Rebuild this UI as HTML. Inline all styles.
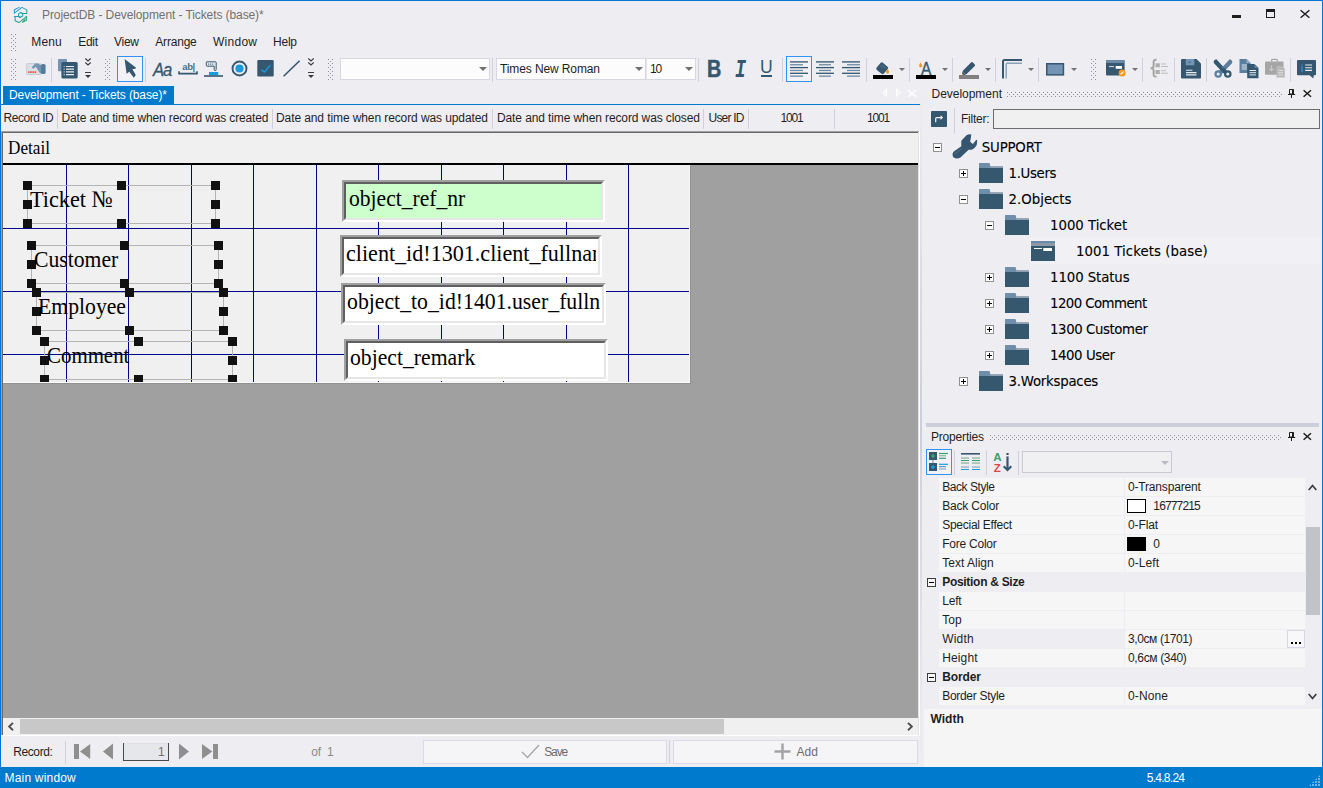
<!DOCTYPE html>
<html><head><meta charset="utf-8"><title>ProjectDB - Development - Tickets (base)*</title>
<style>
*{box-sizing:border-box;margin:0;padding:0}
html,body{width:1323px;height:788px;overflow:hidden;background:#eeeef2}
body{position:relative;font-family:"Liberation Sans",sans-serif;font-size:12px;color:#1e1e1e}
.a{position:absolute}
svg{position:absolute;overflow:visible}
.t{position:absolute;white-space:pre}
.sep{position:absolute;width:1px;background:#cfd0da}
.grip{position:absolute;width:5px;background-image:radial-gradient(circle at 0.5px 0.5px,#9a9aa6 0.6px,transparent 0.7px),radial-gradient(circle at 0.5px 0.5px,#9a9aa6 0.6px,transparent 0.7px);background-size:4px 4px,4px 4px;background-position:0 0,2px 2px}
.dots{position:absolute;height:7px;background-image:radial-gradient(circle at 0.5px 0.5px,#a3a3ad 0.6px,transparent 0.7px),radial-gradient(circle at 0.5px 0.5px,#a3a3ad 0.6px,transparent 0.7px);background-size:4px 4px,4px 4px;background-position:0 0,2px 2px}
.combo{position:absolute;background:#fcfcfc;border:1px solid #d6d7e3}
.arr{position:absolute;width:0;height:0;border-left:4px solid transparent;border-right:4px solid transparent;border-top:4px solid #717171}
.sarr{position:absolute;width:0;height:0;border-left:3px solid transparent;border-right:3px solid transparent;border-top:3px solid #717171}
.selbtn{position:absolute;border:1px solid #3392f5;background:#f2f2f6}
.h{position:absolute;width:9px;height:9px;background:#111}
.lblrect{position:absolute;border:1px solid #b4b4b4}
.vl{position:absolute;width:1px;background:#00008b;top:165px;height:217px}
.hl{position:absolute;height:1px;background:#00008b;left:3px;width:686px}
.tb{position:absolute;border-style:solid;border-color:#a0a0a0 #fff #fff #a0a0a0;border-width:2px}
.tb>div{position:absolute;left:0;top:0;right:0;bottom:0;border-style:solid;border-color:#5f5f5f #e6e6e6 #e6e6e6 #5f5f5f;border-width:2px}
.exp{position:absolute;width:9px;height:9px;border:1px solid #919191;background:#fff}
.exp:before{content:"";position:absolute;left:1px;top:3px;width:5px;height:1px;background:#000}
.exp.p:after{content:"";position:absolute;left:3px;top:1px;width:1px;height:5px;background:#000}
</style></head><body>
<svg width="0" height="0" style="left:0;top:0"><defs><pattern id="dp" width="4" height="4" patternUnits="userSpaceOnUse"><rect x="0" y="0" width="1" height="1" fill="#8f8f98"/><rect x="2" y="2" width="1" height="1" fill="#8f8f98"/></pattern></defs></svg>
<div class="a" style="left:0px;top:0px;width:1323px;height:1px;background:#0674d4;"></div>
<div class="a" style="left:0px;top:0px;width:1px;height:788px;background:#0674d4;"></div>
<div class="a" style="left:1322px;top:0px;width:1px;height:788px;background:#0674d4;"></div>
<div class="t" style='left:42.00px;top:9.14px;font-size:12px;line-height:12px;height:12px;color:#717171;letter-spacing:-0.093px;'>ProjectDB - Development - Tickets (base)*</div>
<svg style="left:8px;top:2px" width="30" height="26" viewBox="0 0 30 26"><defs><linearGradient id="lg" x1="6" y1="5" x2="19" y2="21" gradientUnits="userSpaceOnUse"><stop offset="0" stop-color="#1e96e6"/><stop offset="0.5" stop-color="#2a9db0"/><stop offset="1" stop-color="#3aa868"/></linearGradient></defs><g fill="none" stroke="url(#lg)" stroke-width="1.05" stroke-linejoin="round" stroke-linecap="round"><path d="M6.4 7.7 L11.2 5.4 M6.4 7.7 V11.2 L13.9 5.4 L18.8 7.9 V11.4 H14.8 L12.5 10.4"/><path d="M10.6 11.6 L12.6 10.6 L14.7 11.7 V14 L12.4 15.3 L10.6 14.3Z"/><path d="M6.3 14.5 L10.4 14.5 L12.4 15.4 M7.1 14.8 V18.8 L11 20.6 L18.6 14.4 V18.2 L14.4 20.2 L17.3 17"/></g></svg>
<div class="a" style="left:1232px;top:15px;width:9px;height:3px;background:#1e1e1e"></div>
<div class="a" style="left:1266px;top:9px;width:9px;height:9px;border:1px solid #1e1e1e;border-top-width:3px"></div>
<svg style="left:1300px;top:10px" width="10" height="8" viewBox="0 0 10 8"><path d="M0.6 0.3 L9.4 7.7 M9.4 0.3 L0.6 7.7" stroke="#1e1e1e" stroke-width="1.5" fill="none"/></svg>
<svg style="left:11px;top:34px" width="5" height="17"><rect width="5" height="17" fill="url(#dp)"/></svg>
<div class="t" style='left:31.30px;top:35.84px;font-size:12px;line-height:12px;height:12px;color:#1e1e1e;letter-spacing:0.123px;'>Menu</div>
<div class="t" style='left:78.20px;top:35.84px;font-size:12px;line-height:12px;height:12px;color:#1e1e1e;letter-spacing:-0.296px;'>Edit</div>
<div class="t" style='left:114.00px;top:35.84px;font-size:12px;line-height:12px;height:12px;color:#1e1e1e;letter-spacing:-0.266px;'>View</div>
<div class="t" style='left:155.30px;top:35.84px;font-size:12px;line-height:12px;height:12px;color:#1e1e1e;letter-spacing:-0.201px;'>Arrange</div>
<div class="t" style='left:213.00px;top:35.84px;font-size:12px;line-height:12px;height:12px;color:#1e1e1e;letter-spacing:0.263px;'>Window</div>
<div class="t" style='left:273.00px;top:35.84px;font-size:12px;line-height:12px;height:12px;color:#1e1e1e;letter-spacing:-0.229px;'>Help</div>
<svg style="left:11px;top:59px" width="5" height="21"><rect width="5" height="21" fill="url(#dp)"/></svg>
<svg style="left:105px;top:59px" width="5" height="21"><rect width="5" height="21" fill="url(#dp)"/></svg>
<svg style="left:328px;top:59px" width="5" height="21"><rect width="5" height="21" fill="url(#dp)"/></svg>
<svg style="left:1091px;top:59px" width="5" height="21"><rect width="5" height="21" fill="url(#dp)"/></svg>
<svg style="left:26px;top:62px" width="20" height="14" viewBox="0 0 20 14"><rect x="0.5" y="1.5" width="14.5" height="11" rx="0.8" fill="#dcdfe3" stroke="#c3c7cd" stroke-width="0.8"/><path d="M2 9.3h1.6v1.6H2z M4.2 9.3h1.6v1.6H4.2z M6.4 9.3h1.6v1.6H6.4z M8.6 9.3h1.6v1.6H8.6z" fill="#f0504a"/><path d="M6 5.2 Q8.5 1.2 11 1.3 L15.5 3.2 L15.5 11.5 Q13.5 11.5 12.5 9 L9.8 4.8 L7.6 6.6 Q5.6 6.8 6 5.2Z" fill="#7696b4"/><rect x="15" y="2" width="4.6" height="10" rx="1.6" fill="#567c9c"/></svg>
<div class="sep" style="left:51px;top:58px;height:24px"></div>
<svg style="left:58px;top:59px" width="20" height="20" viewBox="0 0 20 20"><rect x="0" y="0" width="9" height="12.3" rx="0.8" fill="#7494b5"/><rect x="3.4" y="3" width="16.3" height="16.5" rx="1.5" fill="#35576f"/><path d="M8 7.5H16 M8 10.2H16 M8 12.9H16 M8 15.6H16" stroke="#e8edf2" stroke-width="1.2"/><path d="M5.6 7.5H6.8 M5.6 10.2H6.8 M5.6 12.9H6.8 M5.6 15.6H6.8" stroke="#b9c7d4" stroke-width="1.2"/></svg>
<svg style="left:85px;top:58px" width="6" height="21" viewBox="0 0 6 21"><path d="M0.3 0.5 L3 3 L5.7 0.5 M0.3 4.5 L3 7 L5.7 4.5" fill="none" stroke="#3b3b3b" stroke-width="1.1"/><rect x="0" y="14" width="6" height="1" fill="#3b3b3b"/><path d="M0 17 H6 L3 20Z" fill="#3b3b3b"/></svg>
<div class="selbtn" style="left:117px;top:56px;width:26px;height:26px"></div>
<svg style="left:117px;top:56px" width="26" height="26" viewBox="0 0 26 26"><path d="M7.6 3.1 L18.8 11.6 L18.9 12.6 L15.4 13.3 L18.8 19.1 L16.8 21.8 L12.3 15.8 L9.6 17.7Z" fill="#35576f"/></svg>
<div class="sep" style="left:145px;top:58px;height:24px"></div>
<div class="t" style="left:152.5px;top:58.5px;font-size:19px;line-height:22px;font-style:italic;color:#35576f;-webkit-text-stroke:0.3px #35576f;letter-spacing:-1.2px;transform-origin:0 0;transform:scaleX(0.88)">Aa</div>
<div class="t" style="left:182.3px;top:60.8px;font-size:9.5px;line-height:12px;font-weight:bold;color:#4d6f8a;letter-spacing:-0.4px">ab|</div>
<svg style="left:178px;top:71px" width="20" height="4" viewBox="0 0 20 4"><path d="M1 0.3 V2.6 H19 V0.3" fill="none" stroke="#35576f" stroke-width="1.6"/></svg>
<svg style="left:204px;top:61px" width="19" height="16" viewBox="0 0 19 16"><path d="M2.7 0.8 H11.5 Q12.2 0.8 12.2 1.6 V8.6 Q12.2 9.6 11.2 9.6 Q10.2 9.6 10.2 8.6 V5.2 H3.2 Q2.3 5.2 2.3 4.2 V1.4 Q2.3 0.8 2.7 0.8Z" fill="#e3e8ee" stroke="#35576f" stroke-width="1"/><path d="M4 3.2h1.2 M6 3.2h1.2 M8 3.2h1.2" stroke="#5b7f9e" stroke-width="1.2"/><rect x="5" y="11" width="9.3" height="3.3" fill="#1a9bdc"/><rect x="0" y="14.2" width="19" height="1.6" fill="#35576f"/></svg>
<svg style="left:231px;top:60px" width="17" height="17" viewBox="0 0 17 17"><circle cx="8.5" cy="8.5" r="7" fill="none" stroke="#35576f" stroke-width="1.9"/><circle cx="8.5" cy="8.5" r="4.1" fill="#1a9bdc"/></svg>
<svg style="left:257px;top:60px" width="17" height="17" viewBox="0 0 17 17"><rect x="0.3" y="0.1" width="16.4" height="16.4" rx="1.2" fill="#35576f"/><path d="M4.3 9.8 L7.5 12 L13.2 5.1" fill="none" stroke="#1a9bdc" stroke-width="1.4"/></svg>
<svg style="left:283px;top:60px" width="17" height="17" viewBox="0 0 17 17"><path d="M0.6 16.3 L16.6 0.7" stroke="#35576f" stroke-width="1.6"/></svg>
<svg style="left:308px;top:58px" width="6" height="21" viewBox="0 0 6 21"><path d="M0.3 0.5 L3 3 L5.7 0.5 M0.3 4.5 L3 7 L5.7 4.5" fill="none" stroke="#3b3b3b" stroke-width="1.1"/><rect x="0" y="14" width="6" height="1" fill="#3b3b3b"/><path d="M0 17 H6 L3 20Z" fill="#3b3b3b"/></svg>
<div class="combo" style="left:340px;top:58px;width:150px;height:22px"></div>
<div class="arr" style="left:479px;top:67px"></div>
<div class="sep" style="left:492px;top:58px;height:24px"></div>
<div class="combo" style="left:496px;top:58px;width:150px;height:22px"></div>
<div class="arr" style="left:635px;top:67px"></div>
<div class="t" style='left:500.00px;top:63.14px;font-size:12px;line-height:12px;height:12px;color:#1e1e1e;letter-spacing:-0.113px;'>Times New Roman</div>
<div class="combo" style="left:646px;top:58px;width:50px;height:22px;border-left-color:#e4e5ee"></div>
<div class="arr" style="left:685px;top:67px"></div>
<div class="t" style='left:650.00px;top:63.14px;font-size:12px;line-height:12px;height:12px;color:#1e1e1e;letter-spacing:-1.200px;'>10</div>
<div class="sep" style="left:698px;top:58px;height:24px"></div>
<div class="t" style="left:707px;top:55px;font-size:23px;line-height:28px;font-weight:bold;color:#35576f;-webkit-text-stroke:0.5px #35576f;transform-origin:0 0;transform:scaleX(0.86)">B</div>
<div class="t" style='left:734.5px;top:56.5px;font-family:"Liberation Mono",monospace;font-size:25.5px;line-height:28px;font-weight:bold;font-style:italic;color:#35576f;transform-origin:0 0;transform:scaleX(0.72)'>I</div>
<div class="t" style="left:759.8px;top:55.8px;font-size:18.5px;line-height:22px;color:#35576f;transform-origin:0 0;transform:scaleX(0.95)">U</div>
<div class="a" style="left:761px;top:75.3px;width:11px;height:1.7px;background:#35576f;"></div>
<div class="sep" style="left:782px;top:58px;height:24px"></div>
<div class="selbtn" style="left:786px;top:56px;width:26px;height:26px"></div>
<svg style="left:790px;top:60px" width="18" height="18" viewBox="0 0 18 18"><rect x="0" y="1.25" width="18" height="1.3" fill="#35576f"/><rect x="0" y="4.10" width="13" height="1.3" fill="#6d8aa3"/><rect x="0" y="6.95" width="18" height="1.3" fill="#35576f"/><rect x="0" y="9.80" width="13" height="1.3" fill="#6d8aa3"/><rect x="0" y="12.65" width="18" height="1.3" fill="#35576f"/><rect x="0" y="15.50" width="13" height="1.3" fill="#6d8aa3"/></svg>
<svg style="left:816px;top:60px" width="18" height="18" viewBox="0 0 18 18"><rect x="0" y="1.25" width="18" height="1.3" fill="#35576f"/><rect x="3" y="4.10" width="12" height="1.3" fill="#6d8aa3"/><rect x="0" y="6.95" width="18" height="1.3" fill="#35576f"/><rect x="3" y="9.80" width="12" height="1.3" fill="#6d8aa3"/><rect x="0" y="12.65" width="18" height="1.3" fill="#35576f"/><rect x="3" y="15.50" width="12" height="1.3" fill="#6d8aa3"/></svg>
<svg style="left:842px;top:60px" width="18" height="18" viewBox="0 0 18 18"><rect x="0" y="1.25" width="18" height="1.3" fill="#35576f"/><rect x="5" y="4.10" width="13" height="1.3" fill="#6d8aa3"/><rect x="0" y="6.95" width="18" height="1.3" fill="#35576f"/><rect x="5" y="9.80" width="13" height="1.3" fill="#6d8aa3"/><rect x="0" y="12.65" width="18" height="1.3" fill="#35576f"/><rect x="5" y="15.50" width="13" height="1.3" fill="#6d8aa3"/></svg>
<div class="sep" style="left:866px;top:58px;height:24px"></div>
<svg style="left:873px;top:61px" width="20" height="14" viewBox="0 0 20 14"><g transform="rotate(40 9.2 7.3)"><rect x="4.5" y="2.6" width="9.4" height="9.4" rx="1.7" fill="#35576f"/><path d="M6.3 5h5.6 M6.3 6.8h3" stroke="#5b7f9e" stroke-width="0.7"/></g><path d="M14.4 7.8 Q16.4 10.2 16.1 11.5 Q15.6 12.8 14.3 12.6 Q12.7 12.2 13 10.5Z" fill="#f59a1b"/></svg>
<div class="a" style="left:873px;top:75px;width:20px;height:4px;background:#000;"></div>
<div class="sarr" style="left:899px;top:68px"></div>
<div class="sep" style="left:909px;top:58px;height:24px"></div>
<svg style="left:916px;top:61px" width="20" height="14" viewBox="0 0 20 14"><path d="M4.4 1.2 Q6.6 4 6.3 5.3 Q5.7 6.6 4.4 6.4 Q2.8 6 3.1 4.3Z" fill="#f59a1b"/></svg>
<div class="t" style="left:921.4px;top:58.4px;font-size:18.5px;line-height:22px;color:#35576f;-webkit-text-stroke:0.35px #35576f;transform-origin:0 0;transform:scaleX(0.84)">A</div>
<div class="a" style="left:916px;top:75px;width:20px;height:4px;background:#000;"></div>
<div class="sarr" style="left:942px;top:68px"></div>
<div class="sep" style="left:952px;top:58px;height:24px"></div>
<svg style="left:959px;top:61px" width="20" height="14" viewBox="0 0 20 14"><g transform="rotate(-45 9 8)"><rect x="3.5" y="5.6" width="13.5" height="5" rx="1" fill="#35576f"/><path d="M3.5 5.6 L0.2 8.1 L3.5 10.6Z" fill="#35576f"/><path d="M1.8 6.9 L0 8.1 L1.8 9.3Z" fill="#f59a1b"/></g></svg>
<div class="a" style="left:959px;top:75px;width:20px;height:4px;background:#808080;"></div>
<div class="sarr" style="left:985px;top:68px"></div>
<div class="sep" style="left:995px;top:58px;height:24px"></div>
<svg style="left:1002px;top:59px" width="20" height="20" viewBox="0 0 20 20"><path d="M1 19.5 V2.5 Q1 1 2.5 1 H20" fill="none" stroke="#35576f" stroke-width="2"/><path d="M4.2 19.5 V5 Q4.2 4.2 5 4.2 H20" fill="none" stroke="#8ea2b6" stroke-width="1.5"/></svg>
<div class="sarr" style="left:1028px;top:68px"></div>
<div class="sep" style="left:1038px;top:58px;height:24px"></div>
<svg style="left:1046px;top:62.6px" width="18.2" height="12.6" viewBox="0 0 18.2 12.6"><rect x="0.75" y="0.75" width="16.7" height="11.1" fill="#7494b5" stroke="#35576f" stroke-width="1.5"/></svg>
<div class="sarr" style="left:1071px;top:68px"></div>
<svg style="left:1106px;top:60px" width="20" height="17" viewBox="0 0 20 17"><rect x="0" y="0" width="18.6" height="15.5" rx="1" fill="#35576f"/><rect x="0" y="0" width="18.6" height="3" rx="0.8" fill="#6b8aa5"/><rect x="3" y="6.2" width="5" height="0.9" fill="#e8edf2"/><rect x="9.7" y="6" width="6.3" height="2.8" fill="#fff"/><circle cx="16.1" cy="13" r="3.5" fill="#f59a1b"/><path d="M14.6 14.4 L17.6 11.6" stroke="#fff" stroke-width="1.2"/></svg>
<div class="sarr" style="left:1132px;top:68px"></div>
<div class="sep" style="left:1142px;top:58px;height:24px"></div>
<svg style="left:1149px;top:59px" width="20" height="19" viewBox="0 0 20 19"><path d="M7.5 0.8 Q4.6 0.6 4.6 3 V7 Q4.6 9.2 1.6 9.2 Q4.6 9.2 4.6 11.4 V15.4 Q4.6 17.8 7.5 17.6" fill="none" stroke="#a3a3a3" stroke-width="1.9"/><rect x="6.5" y="4.3" width="4.3" height="4" fill="#adadad"/><rect x="6.5" y="11" width="4.3" height="4" fill="#adadad"/><path d="M12 5H17 M12 7.5H19 M12 11.7H17 M12 14.2H19" stroke="#bdbdbd" stroke-width="1"/></svg>
<div class="sep" style="left:1174px;top:58px;height:24px"></div>
<svg style="left:1181px;top:59px" width="20" height="20" viewBox="0 0 20 20"><path d="M1 0 H15.5 L20 4.5 V18.5 Q20 19.5 19 19.5 H1 Q0 19.5 0 18.5 V1 Q0 0 1 0Z" fill="#35576f"/><rect x="4.8" y="0" width="8.5" height="6.3" fill="#7494b5"/><rect x="7.5" y="2.7" width="2.2" height="1" fill="#35576f"/><path d="M5 11.3H11.5 M5 13.6H15.5 M5 15.9H15.5" stroke="#e8edf2" stroke-width="1.1"/></svg>
<div class="sep" style="left:1206px;top:58px;height:24px"></div>
<svg style="left:1213px;top:59px" width="20" height="19" viewBox="0 0 20 19"><path d="M16.6 0.3 Q19.8 1 19.2 4 L8.4 15.4 L5.4 12.6Z" fill="#5b7f9e"/><circle cx="14.8" cy="15" r="2.7" fill="none" stroke="#35576f" stroke-width="2.2"/><path d="M3.4 0.3 Q0.2 1 0.8 4 L11.6 15.4 L14.6 12.6Z" fill="#35576f"/><circle cx="5.2" cy="15" r="2.7" fill="none" stroke="#5b7f9e" stroke-width="2.2"/><circle cx="10" cy="8.6" r="0.8" fill="#5b7f9e"/></svg>
<svg style="left:1239px;top:59px" width="20" height="20" viewBox="0 0 20 20"><path d="M0.5 0 H7.5 L11.6 4 V14 H0.5Z" fill="#5b7f9e"/><path d="M7.5 0 L11.6 4 H7.5Z" fill="#8fabc6"/><path d="M2.6 6H8 M2.6 8H8 M2.6 10H8" stroke="#dfe7ee" stroke-width="1"/><path d="M8.2 5 H15.4 L19.5 9 V19.3 H8.2Z" fill="#35576f"/><path d="M15.4 5 L19.5 9 H15.4Z" fill="#5b7f9e"/><path d="M10.5 11.5H17 M10.5 13.7H17 M10.5 15.9H17" stroke="#e8edf2" stroke-width="1"/></svg>
<svg style="left:1265px;top:59px" width="20" height="19" viewBox="0 0 20 19"><rect x="0" y="2.4" width="18.5" height="13.3" rx="1" fill="#a6a6a6"/><path d="M6.5 2.4 V1.8 Q6.5 0.3 8 0.3 H11 Q12.5 0.3 12.5 1.8 V2.4" fill="none" stroke="#a6a6a6" stroke-width="1.3"/><path d="M6.5 6 V11.5 M4.3 9.6 L6.5 11.8 L8.7 9.6" fill="none" stroke="#c9c9c9" stroke-width="1.1"/><path d="M11.5 7 H17 L19.8 9.7 V18.6 H11.5Z" fill="#b9b9b9"/><path d="M13.3 11.5H18 M13.3 13.7H18 M13.3 15.9H18" stroke="#dcdcdc" stroke-width="1"/></svg>
<div class="sep" style="left:1290px;top:58px;height:24px"></div>
<svg style="left:1297px;top:60px" width="19" height="19" viewBox="0 0 19 19"><path d="M1 0 H18 Q19 0 19 1 V14.3 Q19 15.3 18 15.3 H16.8 L16.3 18.4 L12.6 15.3 H1 Q0 15.3 0 14.3 V1 Q0 0 1 0Z" fill="#35576f"/><path d="M8.2 5H15 M8.2 7.7H15 M8.2 10.4H15" stroke="#e8edf2" stroke-width="1.1"/><path d="M5 4.2V5.4 M5 6.6 V11 M4 6.8 H5 M4 10.8H6.2" stroke="#1a9bdc" stroke-width="1.2" fill="none"/></svg>
<svg style="left:882px;top:88px" width="36" height="10" viewBox="0 0 36 10"><path d="M4.7 0.8 L0.6 4.7 L4.7 8.6Z" fill="#f4f4f7" stroke="#fff" stroke-width="1"/><path d="M14.5 0.8 L18.6 4.7 L14.5 8.6Z" fill="#f4f4f7" stroke="#fff" stroke-width="1"/><path d="M26.4 2.2 L33.8 8.8 M33.8 2.2 L26.4 8.8" stroke="#fff" stroke-width="1.5"/></svg>
<div class="a" style="left:1px;top:86px;width:2px;height:18px;background:#f5f5f7;"></div>
<div class="a" style="left:3px;top:86px;width:171px;height:18px;background:#007acc;"></div>
<div class="t" style='left:9.00px;top:88.84px;font-size:12px;line-height:12px;height:12px;color:#fff;letter-spacing:-0.098px;'>Development - Tickets (base)*</div>
<div class="a" style="left:1px;top:104px;width:919px;height:1px;background:#007acc;"></div>
<div class="sep" style="left:57px;top:109px;height:20px"></div>
<div class="sep" style="left:272px;top:109px;height:20px"></div>
<div class="sep" style="left:492px;top:109px;height:20px"></div>
<div class="sep" style="left:703px;top:109px;height:20px"></div>
<div class="sep" style="left:748px;top:109px;height:20px"></div>
<div class="sep" style="left:834px;top:109px;height:20px"></div>
<div class="t" style='left:3.60px;top:112.24px;font-size:12px;line-height:12px;height:12px;color:#1e1e1e;letter-spacing:-0.491px;'>Record ID</div>
<div class="t" style='left:61.40px;top:112.24px;font-size:12px;line-height:12px;height:12px;color:#1e1e1e;letter-spacing:-0.139px;'>Date and time when record was created</div>
<div class="t" style='left:276.00px;top:112.24px;font-size:12px;line-height:12px;height:12px;color:#1e1e1e;letter-spacing:-0.096px;'>Date and time when record was updated</div>
<div class="t" style='left:497.00px;top:112.24px;font-size:12px;line-height:12px;height:12px;color:#1e1e1e;letter-spacing:-0.108px;'>Date and time when record was closed</div>
<div class="t" style='left:708.50px;top:112.24px;font-size:12px;line-height:12px;height:12px;color:#1e1e1e;letter-spacing:-0.779px;'>User ID</div>
<div class="t" style='left:780.50px;top:112.24px;font-size:12px;line-height:12px;height:12px;color:#1e1e1e;letter-spacing:-1.200px;'>1001</div>
<div class="t" style='left:867.00px;top:112.24px;font-size:12px;line-height:12px;height:12px;color:#1e1e1e;letter-spacing:-1.200px;'>1001</div>
<div class="a" style="left:1px;top:131px;width:919px;height:604px;background:#a0a0a0;"></div>
<div class="a" style="left:2px;top:132px;width:918px;height:1px;background:#696969;"></div>
<div class="a" style="left:2px;top:132px;width:1px;height:603px;background:#696969;"></div>
<div class="a" style="left:918px;top:132px;width:1px;height:636px;background:#e3e3e3;"></div>
<div class="a" style="left:919px;top:131px;width:1px;height:637px;background:#fff;"></div>
<div class="a" style="left:3px;top:133px;width:915px;height:30px;background:#f0f0f0;"></div>
<div class="t" style='left:8.00px;top:140.29px;font-size:17.8px;line-height:17.8px;height:17.8px;color:#000;font-family:"Liberation Serif",serif;transform-origin:0 0;transform:scaleX(0.9666);'>Detail</div>
<div class="a" style="left:3px;top:163px;width:915px;height:2px;background:#000;"></div>
<div class="a" style="left:3px;top:165px;width:686px;height:217px;background:#f0f0f0;"></div>
<div class="a" style="left:689px;top:165px;width:1px;height:218px;background:#fafafa;"></div>
<div class="a" style="left:3px;top:382px;width:687px;height:1px;background:#fafafa;"></div>
<div class="a" style="left:690px;top:165px;width:1px;height:219px;background:#919191;"></div>
<div class="a" style="left:3px;top:383px;width:688px;height:1px;background:#919191;"></div>
<div class="vl" style="left:66px"></div>
<div class="vl" style="left:128px"></div>
<div class="vl" style="left:191px"></div>
<div class="vl" style="left:253px"></div>
<div class="vl" style="left:316px"></div>
<div class="vl" style="left:378px"></div>
<div class="vl" style="left:441px"></div>
<div class="vl" style="left:503px"></div>
<div class="vl" style="left:566px"></div>
<div class="vl" style="left:628px"></div>
<div class="hl" style="top:228px"></div>
<div class="hl" style="top:291px"></div>
<div class="hl" style="top:354px"></div>
<div class="a" style="left:4px;top:165px;width:685px;height:217px;overflow:hidden">
<div class="lblrect" style="left:23px;top:20px;width:189px;height:39px"></div>
<div class="h" style="left:19px;top:16px"></div>
<div class="h" style="left:19px;top:35px"></div>
<div class="h" style="left:19px;top:54px"></div>
<div class="h" style="left:113px;top:16px"></div>
<div class="h" style="left:113px;top:54px"></div>
<div class="h" style="left:207px;top:16px"></div>
<div class="h" style="left:207px;top:35px"></div>
<div class="h" style="left:207px;top:54px"></div>
<div class="lblrect" style="left:27px;top:80px;width:188px;height:39px"></div>
<div class="h" style="left:23px;top:76px"></div>
<div class="h" style="left:23px;top:95px"></div>
<div class="h" style="left:23px;top:114px"></div>
<div class="h" style="left:116px;top:76px"></div>
<div class="h" style="left:116px;top:114px"></div>
<div class="h" style="left:210px;top:76px"></div>
<div class="h" style="left:210px;top:95px"></div>
<div class="h" style="left:210px;top:114px"></div>
<div class="lblrect" style="left:32px;top:127px;width:188px;height:39px"></div>
<div class="h" style="left:28px;top:123px"></div>
<div class="h" style="left:28px;top:142px"></div>
<div class="h" style="left:28px;top:161px"></div>
<div class="h" style="left:121px;top:123px"></div>
<div class="h" style="left:121px;top:161px"></div>
<div class="h" style="left:215px;top:123px"></div>
<div class="h" style="left:215px;top:142px"></div>
<div class="h" style="left:215px;top:161px"></div>
<div class="lblrect" style="left:40px;top:176px;width:189px;height:39px"></div>
<div class="h" style="left:36px;top:172px"></div>
<div class="h" style="left:36px;top:191px"></div>
<div class="h" style="left:36px;top:210px"></div>
<div class="h" style="left:130px;top:172px"></div>
<div class="h" style="left:130px;top:210px"></div>
<div class="h" style="left:224px;top:172px"></div>
<div class="h" style="left:224px;top:191px"></div>
<div class="h" style="left:224px;top:210px"></div>
</div>
<div class="t" style='left:29.50px;top:187.82px;font-size:23.5px;line-height:23.5px;height:23.5px;color:#000;font-family:"Liberation Serif",serif;transform-origin:0 0;transform:scaleX(0.9463);'>Ticket №</div>
<div class="t" style='left:33.50px;top:247.62px;font-size:23.5px;line-height:23.5px;height:23.5px;color:#000;font-family:"Liberation Serif",serif;transform-origin:0 0;transform:scaleX(0.9224);'>Customer</div>
<div class="t" style='left:38.00px;top:294.62px;font-size:23.5px;line-height:23.5px;height:23.5px;color:#000;font-family:"Liberation Serif",serif;transform-origin:0 0;transform:scaleX(0.9236);'>Employee</div>
<div class="t" style='left:47.40px;top:343.72px;font-size:23.5px;line-height:23.5px;height:23.5px;color:#000;font-family:"Liberation Serif",serif;transform-origin:0 0;transform:scaleX(0.8889);'>Comment</div>
<div class="tb" style="left:342px;top:180px;width:263px;height:42px;background:#ccffcc"><div></div></div>
<div class="t" style='left:348.70px;top:187.12px;font-size:23.5px;line-height:23.5px;height:23.5px;color:#000;font-family:"Liberation Serif",serif;transform-origin:0 0;transform:scaleX(0.9188);'>object_ref_nr</div>
<div class="tb" style="left:340px;top:235px;width:262px;height:42px;background:#fff"><div></div></div>
<div class="t" style='left:346.30px;top:242.12px;font-size:23.5px;line-height:23.5px;height:23.5px;color:#000;font-family:"Liberation Serif",serif;transform-origin:0 0;transform:scaleX(0.9400);width:266.17px;overflow:hidden;'>client_id!1301.client_fullnan</div>
<div class="tb" style="left:341px;top:283px;width:265px;height:42px;background:#fff"><div></div></div>
<div class="t" style='left:347.00px;top:290.02px;font-size:23.5px;line-height:23.5px;height:23.5px;color:#000;font-family:"Liberation Serif",serif;transform-origin:0 0;transform:scaleX(0.9260);width:274.298px;overflow:hidden;'>object_to_id!1401.user_fulln</div>
<div class="tb" style="left:344px;top:339px;width:264px;height:42px;background:#fff"><div></div></div>
<div class="t" style='left:349.70px;top:346.32px;font-size:23.5px;line-height:23.5px;height:23.5px;color:#000;font-family:"Liberation Serif",serif;transform-origin:0 0;transform:scaleX(0.9232);'>object_remark</div>
<div class="a" style="left:3px;top:718px;width:915px;height:17px;background:#f0f0f0;"></div>
<div class="a" style="left:20px;top:719px;width:704px;height:15px;background:#c8c8c8;"></div>
<div class="a" style="left:1px;top:735px;width:919px;height:1px;background:#fff;"></div>
<svg style="left:7px;top:722px" width="8" height="9" viewBox="0 0 8 9"><path d="M6 0.9 L2.2 4.6 L6 8.3" fill="none" stroke="#505050" stroke-width="2"/></svg>
<svg style="left:906px;top:722px" width="8" height="9" viewBox="0 0 8 9"><path d="M2 0.9 L5.8 4.6 L2 8.3" fill="none" stroke="#505050" stroke-width="2"/></svg>
<div class="a" style="left:1px;top:736px;width:919px;height:32px;background:#eeeef2;"></div>
<div class="t" style='left:13.20px;top:746.34px;font-size:12px;line-height:12px;height:12px;color:#1e1e1e;letter-spacing:-0.389px;'>Record:</div>
<div class="sep" style="left:65px;top:741px;height:23px"></div>
<svg style="left:74px;top:744px" width="17" height="15" viewBox="0 0 17 15"><rect x="0" y="0" width="5" height="15" fill="#8f8f8f"/><path d="M16.2 0 L16.2 15 L6 7.5Z" fill="#8f8f8f"/></svg>
<svg style="left:103px;top:743px" width="11" height="17" viewBox="0 0 11 17"><path d="M10 0.5 L10 16.5 L0 8.5Z" fill="#8f8f8f"/></svg>
<div class="a" style="left:123px;top:743px;width:46px;height:18px;background:#e6e7ea;border:1px solid #4a4a4a;border-top-color:#e0e1e6"></div>
<div class="a" style="left:123px;top:743px;width:1px;height:2px;background:#4a4a4a;"></div>
<div class="a" style="left:168px;top:743px;width:1px;height:2px;background:#4a4a4a;"></div>
<div class="t" style='left:158.00px;top:746.34px;font-size:12px;line-height:12px;height:12px;color:#717171;'>1</div>
<svg style="left:178px;top:743px" width="11" height="17" viewBox="0 0 11 17"><path d="M1 0.5 L1 16.5 L11 8.5Z" fill="#8f8f8f"/></svg>
<svg style="left:202px;top:744px" width="17" height="15" viewBox="0 0 17 15"><rect x="11" y="0" width="5" height="15" fill="#8f8f8f"/><path d="M0 0 L0 15 L10.3 7.5Z" fill="#8f8f8f"/></svg>
<div class="t" style='left:311.20px;top:746.34px;font-size:12px;line-height:12px;height:12px;color:#8a8a8a;letter-spacing:-0.190px;'>of  1</div>
<div class="a" style="left:423px;top:740px;width:244px;height:24px;background:#f5f5f7;border:1px solid #dadbe4"></div>
<div class="a" style="left:673px;top:740px;width:245px;height:24px;background:#f5f5f7;border:1px solid #dadbe4"></div>
<div class="sep" style="left:669px;top:740px;height:24px"></div>
<svg style="left:521px;top:744px" width="19" height="15" viewBox="0 0 19 15"><path d="M1 8 L6.5 13.5 L18 1" fill="none" stroke="#a6a6a6" stroke-width="1.4"/></svg>
<div class="t" style='left:544.20px;top:745.84px;font-size:12px;line-height:12px;height:12px;color:#6d6d6d;letter-spacing:-1.086px;'>Save</div>
<svg style="left:774px;top:743px" width="17" height="17" viewBox="0 0 17 17"><path d="M8.5 0.5V16.5M0.5 8.5H16.5" fill="none" stroke="#a3a3a3" stroke-width="2.4"/></svg>
<div class="t" style='left:796.60px;top:745.84px;font-size:12px;line-height:12px;height:12px;color:#6d6d6d;letter-spacing:-0.030px;'>Add</div>
<div class="a" style="left:920px;top:86px;width:2px;height:681px;background:linear-gradient(to bottom,#eeeef2 0%,#cccedb 50%,#eeeef2 100%);"></div>
<div class="t" style='left:931.50px;top:87.84px;font-size:12px;line-height:12px;height:12px;color:#1e1e1e;letter-spacing:-0.022px;'>Development</div>
<svg style="left:1007px;top:92px" width="275" height="5"><rect width="275" height="5" fill="url(#dp)"/></svg>
<svg style="left:1288px;top:89px" width="8" height="9" viewBox="0 0 8 9"><path d="M1.5 0.5H5.5V5H1.5Z" fill="none" stroke="#1e1e1e" stroke-width="1"/><path d="M5 0.5V5" stroke="#1e1e1e" stroke-width="2"/><path d="M0 5.5H7.2 M3.5 6V9" fill="none" stroke="#1e1e1e" stroke-width="1"/></svg>
<svg style="left:1303px;top:90px" width="8.6" height="7" viewBox="0 0 8.6 7"><path d="M0.6 0.2 L8 6.8 M8 0.2 L0.6 6.8" fill="none" stroke="#1e1e1e" stroke-width="1.5"/></svg>
<svg style="left:931px;top:111px" width="16" height="16" viewBox="0 0 16 16"><rect width="16" height="16" rx="0.8" fill="#35576f"/><path d="M4.7 11.3 V7.6 Q4.7 6.7 5.6 6.7 H10" fill="none" stroke="#eef2f6" stroke-width="1.2"/><path d="M9.5 4.2 L12.1 6.6 L9.5 9Z" fill="#eef2f6"/></svg>
<div class="sep" style="left:954px;top:108px;height:25px"></div>
<div class="t" style='left:961.00px;top:112.84px;font-size:12px;line-height:12px;height:12px;color:#1e1e1e;letter-spacing:-0.250px;'>Filter:</div>
<div class="a" style="left:993px;top:109px;width:327px;height:20px;background:#f0f0f0;border:1px solid #6d6d6d"></div>
<div class="a" style="left:1030px;top:238px;width:292px;height:26px;background:#f1f1f5;"></div>
<div class="exp" style="left:933px;top:143px"></div>
<svg style="left:925px;top:132px" width="140" height="80" viewBox="0 0 1323 756"><path d="M343 82 L392 30 Q415 14 438 24 L427 92 L452 113 L481 77 Q493 66 493 86 L490 118 Q480 150 440 168 L412 168 L335 240 Q300 262 268 238 Q250 210 272 184 L343 134Z" fill="#36566f"/><path d="M285 210 Q300 185 345 160" fill="none" stroke="#7f98ad" stroke-width="4"/></svg>
<div class="t" style='left:981.80px;top:140.85px;font-size:13.3px;line-height:13.3px;height:13.3px;color:#000;font-family:"DejaVu Sans",sans-serif;letter-spacing:-0.163px;-webkit-text-stroke:0.1px #000;'>SUPPORT</div>
<div class="exp p" style="left:959px;top:169px"></div>
<svg style="left:979px;top:163px" width="24" height="20" viewBox="0 0 24 20"><path d="M0.5 0H10.5L11.5 3.4H24V5H0V0.5Z" fill="#6f8eaa"/><rect x="11" y="3.3" width="13" height="1.9" fill="#8fa1b1"/><rect x="0" y="5" width="24" height="15" fill="#35586f"/></svg>
<div class="t" style='left:1008.60px;top:166.85px;font-size:13.3px;line-height:13.3px;height:13.3px;color:#000;font-family:"DejaVu Sans",sans-serif;letter-spacing:-0.337px;-webkit-text-stroke:0.1px #000;'>1.Users</div>
<div class="exp" style="left:959px;top:195px"></div>
<svg style="left:979px;top:189px" width="24" height="20" viewBox="0 0 24 20"><path d="M0.5 0H10.5L11.5 3.4H24V5H0V0.5Z" fill="#6f8eaa"/><rect x="11" y="3.3" width="13" height="1.9" fill="#8fa1b1"/><rect x="0" y="5" width="24" height="15" fill="#35586f"/></svg>
<div class="t" style='left:1008.60px;top:192.85px;font-size:13.3px;line-height:13.3px;height:13.3px;color:#000;font-family:"DejaVu Sans",sans-serif;-webkit-text-stroke:0.1px #000;'>2.Objects</div>
<div class="exp" style="left:985px;top:221px"></div>
<svg style="left:1005px;top:215px" width="24" height="20" viewBox="0 0 24 20"><path d="M0.5 0H10.5L11.5 3.4H24V5H0V0.5Z" fill="#6f8eaa"/><rect x="11" y="3.3" width="13" height="1.9" fill="#8fa1b1"/><rect x="0" y="5" width="24" height="15" fill="#35586f"/></svg>
<div class="t" style='left:1050.00px;top:218.85px;font-size:13.3px;line-height:13.3px;height:13.3px;color:#000;font-family:"DejaVu Sans",sans-serif;letter-spacing:-0.021px;-webkit-text-stroke:0.1px #000;'>1000 Ticket</div>
<svg style="left:1031px;top:241px" width="24" height="20" viewBox="0 0 24 20"><rect width="24" height="20" fill="#35586f"/><rect width="24" height="2" fill="#6b8aa5"/><rect y="2" width="24" height="3" fill="#8a9aa8"/><rect x="3" y="7" width="8" height="1" fill="#fff"/><rect x="12.3" y="7" width="8.7" height="3" fill="#fff"/></svg>
<div class="t" style='left:1076.00px;top:244.85px;font-size:13.3px;line-height:13.3px;height:13.3px;color:#000;font-family:"DejaVu Sans",sans-serif;letter-spacing:0.053px;-webkit-text-stroke:0.1px #000;'>1001 Tickets (base)</div>
<div class="exp p" style="left:985px;top:273px"></div>
<svg style="left:1005px;top:267px" width="24" height="20" viewBox="0 0 24 20"><path d="M0.5 0H10.5L11.5 3.4H24V5H0V0.5Z" fill="#6f8eaa"/><rect x="11" y="3.3" width="13" height="1.9" fill="#8fa1b1"/><rect x="0" y="5" width="24" height="15" fill="#35586f"/></svg>
<div class="t" style='left:1050.00px;top:270.85px;font-size:13.3px;line-height:13.3px;height:13.3px;color:#000;font-family:"DejaVu Sans",sans-serif;letter-spacing:-0.084px;-webkit-text-stroke:0.1px #000;'>1100 Status</div>
<div class="exp p" style="left:985px;top:299px"></div>
<svg style="left:1005px;top:293px" width="24" height="20" viewBox="0 0 24 20"><path d="M0.5 0H10.5L11.5 3.4H24V5H0V0.5Z" fill="#6f8eaa"/><rect x="11" y="3.3" width="13" height="1.9" fill="#8fa1b1"/><rect x="0" y="5" width="24" height="15" fill="#35586f"/></svg>
<div class="t" style='left:1050.00px;top:296.85px;font-size:13.3px;line-height:13.3px;height:13.3px;color:#000;font-family:"DejaVu Sans",sans-serif;letter-spacing:-0.556px;-webkit-text-stroke:0.1px #000;'>1200 Comment</div>
<div class="exp p" style="left:985px;top:325px"></div>
<svg style="left:1005px;top:319px" width="24" height="20" viewBox="0 0 24 20"><path d="M0.5 0H10.5L11.5 3.4H24V5H0V0.5Z" fill="#6f8eaa"/><rect x="11" y="3.3" width="13" height="1.9" fill="#8fa1b1"/><rect x="0" y="5" width="24" height="15" fill="#35586f"/></svg>
<div class="t" style='left:1050.00px;top:322.85px;font-size:13.3px;line-height:13.3px;height:13.3px;color:#000;font-family:"DejaVu Sans",sans-serif;letter-spacing:-0.396px;-webkit-text-stroke:0.1px #000;'>1300 Customer</div>
<div class="exp p" style="left:985px;top:351px"></div>
<svg style="left:1005px;top:345px" width="24" height="20" viewBox="0 0 24 20"><path d="M0.5 0H10.5L11.5 3.4H24V5H0V0.5Z" fill="#6f8eaa"/><rect x="11" y="3.3" width="13" height="1.9" fill="#8fa1b1"/><rect x="0" y="5" width="24" height="15" fill="#35586f"/></svg>
<div class="t" style='left:1050.00px;top:348.85px;font-size:13.3px;line-height:13.3px;height:13.3px;color:#000;font-family:"DejaVu Sans",sans-serif;letter-spacing:-0.422px;-webkit-text-stroke:0.1px #000;'>1400 User</div>
<div class="exp p" style="left:959px;top:377px"></div>
<svg style="left:979px;top:371px" width="24" height="20" viewBox="0 0 24 20"><path d="M0.5 0H10.5L11.5 3.4H24V5H0V0.5Z" fill="#6f8eaa"/><rect x="11" y="3.3" width="13" height="1.9" fill="#8fa1b1"/><rect x="0" y="5" width="24" height="15" fill="#35586f"/></svg>
<div class="t" style='left:1008.60px;top:374.85px;font-size:13.3px;line-height:13.3px;height:13.3px;color:#000;font-family:"DejaVu Sans",sans-serif;letter-spacing:-0.236px;-webkit-text-stroke:0.1px #000;'>3.Workspaces</div>
<div class="a" style="left:926px;top:423px;width:393px;height:4px;background:#cccedb;"></div>
<div class="t" style='left:931.00px;top:430.84px;font-size:12px;line-height:12px;height:12px;color:#1e1e1e;letter-spacing:-0.189px;'>Properties</div>
<svg style="left:990px;top:435px" width="292" height="5"><rect width="292" height="5" fill="url(#dp)"/></svg>
<svg style="left:1288px;top:432px" width="8" height="9" viewBox="0 0 8 9"><path d="M1.5 0.5H5.5V5H1.5Z" fill="none" stroke="#1e1e1e" stroke-width="1"/><path d="M5 0.5V5" stroke="#1e1e1e" stroke-width="2"/><path d="M0 5.5H7.2 M3.5 6V9" fill="none" stroke="#1e1e1e" stroke-width="1"/></svg>
<svg style="left:1303px;top:433px" width="8.6" height="7" viewBox="0 0 8.6 7"><path d="M0.6 0.2 L8 6.8 M8 0.2 L0.6 6.8" fill="none" stroke="#1e1e1e" stroke-width="1.5"/></svg>
<div class="selbtn" style="left:926px;top:449px;width:26px;height:26px"></div>
<svg style="left:929px;top:452px" width="20" height="19" viewBox="0 0 20 19"><rect x="0" y="0" width="8" height="8" fill="#35576f"/><rect x="0" y="11" width="8" height="8" fill="#35576f"/><rect x="3.5" y="8" width="1" height="3" fill="#7b8f9e"/><path d="M1.8 4 L4 1.8 L6.2 4 L4 6.2Z" fill="#3aa070"/><path d="M1.8 15 L4 12.8 L6.2 15 L4 17.2Z" fill="#1a9bdc"/><rect x="10" y="0.9" width="9" height="1.2" fill="#3aa070"/><rect x="10" y="3" width="7" height="1.4" fill="#9cbcaa"/><rect x="10" y="5.7" width="7" height="1.2" fill="#3aa070"/><rect x="10" y="11.7" width="9" height="1.2" fill="#1a9bdc"/><rect x="10" y="14" width="7" height="1.2" fill="#5b9cc0"/><rect x="10" y="16.3" width="7" height="1.4" fill="#9bb8cb"/></svg>
<svg style="left:961px;top:453px" width="19" height="18" viewBox="0 0 19 18"><rect x="0" y="0" width="19" height="1.6" fill="#35576f"/><rect x="0" y="4.3" width="8" height="1.5" fill="#9cbcaa"/><rect x="0" y="7" width="8" height="1" fill="#3aa070"/><rect x="0" y="9.3" width="8" height="1.5" fill="#9cbcaa"/><rect x="0" y="13.3" width="8" height="1.5" fill="#9bb8cb"/><rect x="0" y="16" width="8" height="1" fill="#1a9bdc"/><rect x="11" y="4.3" width="8" height="1.5" fill="#9cbcaa"/><rect x="11" y="7" width="8" height="1" fill="#3aa070"/><rect x="11" y="9.3" width="8" height="1.5" fill="#9cbcaa"/><rect x="11" y="13.3" width="8" height="1.5" fill="#9bb8cb"/><rect x="11" y="16" width="8" height="1" fill="#1a9bdc"/></svg>
<div class="t" style="left:993.3px;top:450.6px;font-size:11.5px;line-height:12px;font-weight:bold;color:#3aa070">A</div>
<div class="t" style="left:993.8px;top:461.8px;font-size:11.5px;line-height:12px;font-weight:bold;color:#e0443e">Z</div>
<svg style="left:1003px;top:452px" width="9" height="20" viewBox="0 0 9 20"><rect x="3.4" y="1" width="2.2" height="2" fill="#35576f"/><rect x="3.4" y="4.4" width="2.2" height="13.6" fill="#35576f"/><path d="M0.7 14.3 L4.5 18.1 L8.3 14.3" fill="none" stroke="#35576f" stroke-width="2.1"/></svg>
<div class="sep" style="left:954px;top:451px;height:24px"></div>
<div class="sep" style="left:986px;top:451px;height:24px"></div>
<div class="sep" style="left:1018px;top:451px;height:24px"></div>
<div class="a" style="left:1022px;top:451px;width:150px;height:22px;background:#f0f0f3;border:1px solid #c8c9d2"></div>
<div class="arr" style="left:1161px;top:461px;border-top-color:#b9bac4"></div>
<div class="a" style="left:926px;top:478px;width:379px;height:228px;background:#eeeef2;"></div>
<div class="a" style="left:939px;top:478px;width:366px;height:18px;background:#f6f6f6;"></div>
<div class="a" style="left:1124px;top:478px;width:1px;height:18px;background:#ededf1;"></div>
<div class="t" style='left:942.20px;top:480.54px;font-size:12px;line-height:12px;height:12px;color:#1e1e1e;letter-spacing:-0.445px;'>Back Style</div>
<div class="t" style='left:1128.00px;top:480.54px;font-size:12px;line-height:12px;height:12px;color:#1e1e1e;letter-spacing:-0.178px;'>0-Transparent</div>
<div class="a" style="left:939px;top:497px;width:366px;height:18px;background:#f6f6f6;"></div>
<div class="a" style="left:1124px;top:497px;width:1px;height:18px;background:#ededf1;"></div>
<div class="t" style='left:942.20px;top:499.54px;font-size:12px;line-height:12px;height:12px;color:#1e1e1e;letter-spacing:-0.188px;'>Back Color</div>
<div class="a" style="left:1127px;top:499px;width:19px;height:14px;background:#fff;border:1px solid #000"></div>
<div class="t" style='left:1153.30px;top:499.54px;font-size:12px;line-height:12px;height:12px;color:#1e1e1e;letter-spacing:-0.842px;'>16777215</div>
<div class="a" style="left:939px;top:516px;width:366px;height:18px;background:#f6f6f6;"></div>
<div class="a" style="left:1124px;top:516px;width:1px;height:18px;background:#ededf1;"></div>
<div class="t" style='left:942.20px;top:518.54px;font-size:12px;line-height:12px;height:12px;color:#1e1e1e;letter-spacing:-0.258px;'>Special Effect</div>
<div class="t" style='left:1128.00px;top:518.54px;font-size:12px;line-height:12px;height:12px;color:#1e1e1e;letter-spacing:-0.097px;'>0-Flat</div>
<div class="a" style="left:939px;top:535px;width:366px;height:18px;background:#f6f6f6;"></div>
<div class="a" style="left:1124px;top:535px;width:1px;height:18px;background:#ededf1;"></div>
<div class="t" style='left:942.20px;top:537.54px;font-size:12px;line-height:12px;height:12px;color:#1e1e1e;letter-spacing:-0.232px;'>Fore Color</div>
<div class="a" style="left:1127px;top:537px;width:19px;height:14px;background:#000;border:1px solid #000"></div>
<div class="t" style='left:1153.30px;top:537.54px;font-size:12px;line-height:12px;height:12px;color:#1e1e1e;'>0</div>
<div class="a" style="left:939px;top:554px;width:366px;height:18px;background:#f6f6f6;"></div>
<div class="a" style="left:1124px;top:554px;width:1px;height:18px;background:#ededf1;"></div>
<div class="t" style='left:942.20px;top:556.54px;font-size:12px;line-height:12px;height:12px;color:#1e1e1e;letter-spacing:0.014px;'>Text Align</div>
<div class="t" style='left:1128.00px;top:556.54px;font-size:12px;line-height:12px;height:12px;color:#1e1e1e;letter-spacing:0.062px;'>0-Left</div>
<div class="exp" style="left:927px;top:578px;border-color:#3c3c3c;background:#f5f5f5"></div>
<div class="t" style='left:942.20px;top:575.54px;font-size:12px;line-height:12px;height:12px;color:#1e1e1e;font-weight:bold;letter-spacing:-0.292px;'>Position &amp; Size</div>
<div class="a" style="left:939px;top:592px;width:366px;height:18px;background:#f6f6f6;"></div>
<div class="a" style="left:1124px;top:592px;width:1px;height:18px;background:#ededf1;"></div>
<div class="t" style='left:942.20px;top:594.54px;font-size:12px;line-height:12px;height:12px;color:#1e1e1e;letter-spacing:-0.172px;'>Left</div>
<div class="a" style="left:939px;top:611px;width:366px;height:18px;background:#f6f6f6;"></div>
<div class="a" style="left:1124px;top:611px;width:1px;height:18px;background:#ededf1;"></div>
<div class="t" style='left:942.20px;top:613.54px;font-size:12px;line-height:12px;height:12px;color:#1e1e1e;letter-spacing:0.070px;'>Top</div>
<div class="a" style="left:939px;top:630px;width:366px;height:18px;background:#f6f6f6;"></div>
<div class="a" style="left:939px;top:630px;width:185px;height:18px;background:#eeeef2;"></div>
<div class="a" style="left:1124px;top:630px;width:1px;height:18px;background:#ededf1;"></div>
<div class="t" style='left:942.20px;top:632.54px;font-size:12px;line-height:12px;height:12px;color:#1e1e1e;letter-spacing:0.178px;'>Width</div>
<div class="t" style='left:1128.00px;top:632.54px;font-size:12px;line-height:12px;height:12px;color:#1e1e1e;letter-spacing:-0.396px;'>3,0см (1701)</div>
<div class="a" style="left:939px;top:649px;width:366px;height:18px;background:#f6f6f6;"></div>
<div class="a" style="left:1124px;top:649px;width:1px;height:18px;background:#ededf1;"></div>
<div class="t" style='left:942.20px;top:651.54px;font-size:12px;line-height:12px;height:12px;color:#1e1e1e;letter-spacing:0.142px;'>Height</div>
<div class="t" style='left:1128.00px;top:651.54px;font-size:12px;line-height:12px;height:12px;color:#1e1e1e;letter-spacing:-0.348px;'>0,6см (340)</div>
<div class="exp" style="left:927px;top:673px;border-color:#3c3c3c;background:#f5f5f5"></div>
<div class="t" style='left:942.20px;top:670.54px;font-size:12px;line-height:12px;height:12px;color:#1e1e1e;font-weight:bold;letter-spacing:-0.129px;'>Border</div>
<div class="a" style="left:939px;top:687px;width:366px;height:18px;background:#f6f6f6;"></div>
<div class="a" style="left:1124px;top:687px;width:1px;height:18px;background:#ededf1;"></div>
<div class="t" style='left:942.20px;top:689.54px;font-size:12px;line-height:12px;height:12px;color:#1e1e1e;letter-spacing:-0.294px;'>Border Style</div>
<div class="t" style='left:1128.00px;top:689.54px;font-size:12px;line-height:12px;height:12px;color:#1e1e1e;letter-spacing:0.128px;'>0-None</div>
<div class="a" style="left:1287px;top:630px;width:18px;height:18px;background:#f8f8fa;border:1px solid #d6d7e3"></div>
<div class="a" style="left:1291px;top:642px;width:2px;height:2px;background:#000;"></div>
<div class="a" style="left:1295px;top:642px;width:2px;height:2px;background:#000;"></div>
<div class="a" style="left:1299px;top:642px;width:2px;height:2px;background:#000;"></div>
<div class="a" style="left:1305px;top:478px;width:17px;height:228px;background:#eeeef2;"></div>
<div class="a" style="left:1306px;top:527px;width:14px;height:88px;background:#c2c3c9;"></div>
<svg style="left:1308px;top:484px" width="9" height="7" viewBox="0 0 9 7"><path d="M0.7 6 L4.5 1.5 L8.3 6" fill="none" stroke="#3b3b3b" stroke-width="1.7"/></svg>
<svg style="left:1308px;top:693px" width="9" height="7" viewBox="0 0 9 7"><path d="M0.7 1 L4.5 5.5 L8.3 1" fill="none" stroke="#3b3b3b" stroke-width="1.7"/></svg>
<div class="a" style="left:924px;top:709px;width:398px;height:58px;background:#f5f5f5;"></div>
<div class="t" style='left:930.40px;top:712.74px;font-size:12px;line-height:12px;height:12px;color:#1e1e1e;font-weight:bold;letter-spacing:0.070px;'>Width</div>
<div class="a" style="left:0px;top:767px;width:1323px;height:21px;background:#007acc;"></div>
<div class="t" style='left:4.50px;top:772.34px;font-size:12px;line-height:12px;height:12px;color:#fff;letter-spacing:0.192px;'>Main window</div>
<div class="t" style='left:1146.80px;top:772.34px;font-size:12px;line-height:12px;height:12px;color:#fff;letter-spacing:-0.739px;'>5.4.8.24</div>
<div class="a" style="left:1309px;top:775px;width:11px;height:11px;background-image:radial-gradient(circle at 1px 1px,#6fb4e6 0.9px,transparent 1px);background-size:3px 3px;clip-path:polygon(100% 0,100% 100%,0 100%)"></div>
</body></html>
